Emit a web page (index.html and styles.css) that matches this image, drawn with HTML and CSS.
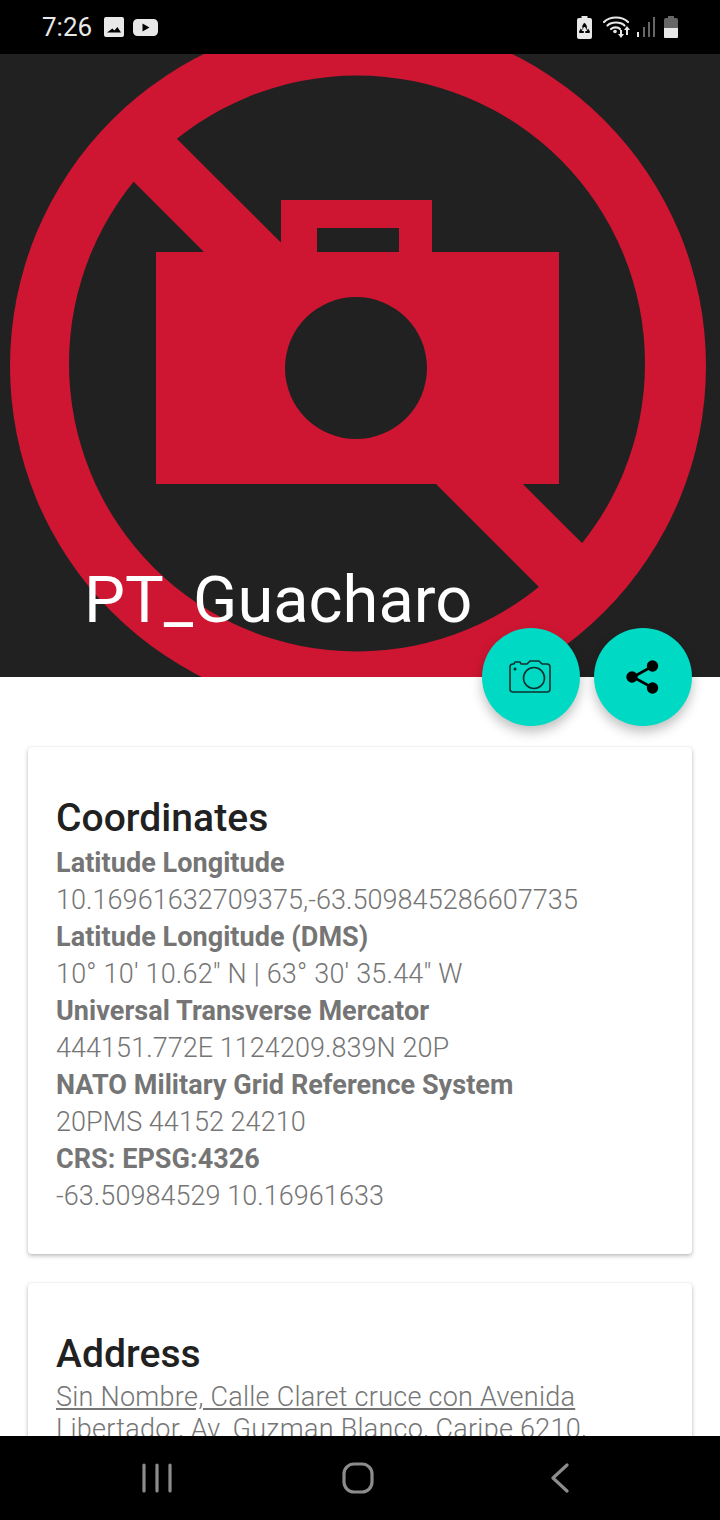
FILE: index.html
```html
<!DOCTYPE html>
<html lang="en">
<head>
    <meta charset="UTF-8">
    <meta name="viewport" content="width=device-width, initial-scale=1.0">
    <title>PT_Guacharo</title>
    <link rel="stylesheet" href="styles.css">
</head>
<body>
    <!-- Status bar -->
    <header class="status-bar">
        <div class="status-left">
            <span class="clock">7:26</span>
            <svg class="picture-icon" width="20" height="20" viewBox="0 0 20 20">
                <path fill="#e8e8e8" fill-rule="evenodd" d="M2 0h16a2 2 0 0 1 2 2v16a2 2 0 0 1-2 2H2a2 2 0 0 1-2-2V2a2 2 0 0 1 2-2zM3 15.500h14l-3.600-5.500-3 3.600-2-2.200z"/>
            </svg>
            <svg width="25" height="17" viewBox="0 0 25 17">
                <path fill="#e8e8e8" fill-rule="evenodd" d="M4.500 0h16a4.500 4.500 0 0 1 4.500 4.500v8a4.500 4.500 0 0 1-4.500 4.500h-16a4.500 4.500 0 0 1-4.500-4.500v-8a4.500 4.500 0 0 1 4.500-4.500zM9.500 4.500v8l7-4z"/>
            </svg>
        </div>
        <div class="status-right">
            <svg class="recycle-icon" width="15" height="23" viewBox="0 0 15 23">
                <path fill="#e8e8e8" d="M4.500 0h6v2h2.500a2 2 0 0 1 2 2v17a2 2 0 0 1-2 2H2a2 2 0 0 1-2-2V4a2 2 0 0 1 2-2h2.500z"/>
                <path fill="none" stroke="#000" stroke-width="2" stroke-linejoin="round" d="M7.500 8l4.500 8H3z"/>
                <path fill="#e8e8e8" d="M4 10.500h1.500v3H4zM9.800 10.500h1.500v3H9.800zM6.800 15h1.500v2.500H6.800z"/>
            </svg>
            <svg class="wifi-icon" width="28" height="22" viewBox="0 0 28 22">
                <g fill="none" stroke="#e8e8e8" stroke-width="2.200" stroke-linecap="round">
                    <path d="M1 6c6-6 18-6 24 0"/>
                    <path d="M4.500 9.500c4-4 13-4 17 0"/>
                    <path d="M8 13c2.500-2.200 7-2.200 9 0"/>
                </g>
                <circle cx="12" cy="15.500" r="1.800" fill="#e8e8e8"/>
                <path fill="#e8e8e8" d="M17 14h2v4h2l-3 4-3-4h2zM24 10l3 4h-2v5h-2v-5h-2z"/>
            </svg>
            <svg class="signal-icon" width="18" height="20" viewBox="0 0 18 20">
                <rect x="0" y="15" width="2" height="5" fill="#e8e8e8"/>
                <rect x="6" y="10" width="2" height="10" fill="#666"/>
                <rect x="11" y="5" width="2" height="15" fill="#666"/>
                <rect x="16" y="0" width="2" height="20" fill="#666"/>
            </svg>
            <svg width="14" height="22" viewBox="0 0 14 22">
                <path fill="#666" d="M4 0h6v2h2a2 2 0 0 1 2 2v8H0V4a2 2 0 0 1 2-2h2z"/>
                <path fill="#e8e8e8" d="M0 12h14v9a1 1 0 0 1-1 1H1a1 1 0 0 1-1-1z"/>
            </svg>
        </div>
    </header>

    <main class="screen">
        <!-- Place photo placeholder -->
        <section class="hero">
            <svg class="hero-art" width="720" height="623" viewBox="0 54 720 623">
                <circle cx="358" cy="366" r="348" fill="#ce1632"/>
                <circle cx="357" cy="363.500" r="288" fill="#212121"/>
                <path fill="#ce1632" d="M104 152L148 110L613 574L570 618z"/>
                <path fill="#ce1632" fill-rule="evenodd" d="M156 252h125v-52h151v52h127v232H156zM317 228v24h82v-24z"/>
                <circle cx="356" cy="368" r="71" fill="#212121"/>
            </svg>
            <h1 class="hero-title">PT_Guacharo</h1>
            <div class="fab-group">
                <button class="fab">
                    <svg width="44" height="34" viewBox="0 0 44 34" fill="none" stroke="#10302e" stroke-width="1.600">
                        <path d="M4 4h1l1-2h5l1 2h6l3-3h9l3 3h5a3 3 0 0 1 3 3v22a3 3 0 0 1-3 3H4a3 3 0 0 1-3-3V7a3 3 0 0 1 3-3z" stroke-linejoin="round"/>
                        <circle cx="25" cy="18" r="10.500"/>
                        <circle cx="6" cy="9" r="1.500" fill="#10302e" stroke="none"/>
                    </svg>
                </button>
                <button class="fab">
                    <svg width="36" height="36" viewBox="0 0 36 36">
                        <path fill="none" stroke="#000" stroke-width="2.600" d="M28 7L8 18l20 11"/>
                        <circle cx="27.500" cy="7" r="5.700"/>
                        <circle cx="7" cy="18" r="5.700"/>
                        <circle cx="27.500" cy="29" r="5.700"/>
                    </svg>
                </button>
            </div>
        </section>

        <!-- Info cards -->
        <section class="cards">
            <article class="card">
                <h2>Coordinates</h2>
                <p class="label">Latitude Longitude</p>
                <p class="value">10.16961632709375,-63.509845286607735</p>
                <p class="label">Latitude Longitude (DMS)</p>
                <p class="value dms">10° 10' 10.62" N | 63° 30' 35.44" W</p>
                <p class="label">Universal Transverse Mercator</p>
                <p class="value">444151.772E 1124209.839N 20P</p>
                <p class="label">NATO Military Grid Reference System</p>
                <p class="value">20PMS 44152 24210</p>
                <p class="label">CRS: EPSG:4326</p>
                <p class="value">-63.50984529 10.16961633</p>
            </article>
            <article class="card">
                <h2>Address</h2>
                <p class="address"><a href="#">Sin Nombre, Calle Claret cruce con Avenida</a><br><a href="#">Libertador, Av. Guzman Blanco, Caripe 6210,</a></p>
            </article>
        </section>
    </main>

    <!-- Navigation bar -->
    <nav class="nav-bar">
        <svg width="30" height="30" viewBox="0 0 30 30" fill="none" stroke="#8c8c8c" stroke-width="3.200" stroke-linecap="round">
            <path d="M2 2v26M15 2v26M28 2v26"/>
        </svg>
        <svg width="32" height="32" viewBox="0 0 32 32" fill="none" stroke="#8c8c8c" stroke-width="3.200">
            <rect x="2" y="2" width="28" height="28" rx="10"/>
        </svg>
        <svg class="back-icon" width="20" height="30" viewBox="0 0 20 30" fill="none" stroke="#8c8c8c" stroke-width="3.200" stroke-linecap="round" stroke-linejoin="round">
            <path d="M17 2L3 15l14 13"/>
        </svg>
    </nav>
</body>
</html>
```

FILE: styles.css
```css
html, body {
    margin: 0;
    padding: 0;
}

body {
    width: 720px;
    height: 1520px;
    display: flex;
    flex-direction: column;
    overflow: hidden;
    font-family: Roboto, sans-serif;
    background: white;
}

.status-bar {
    height: 54px;
    flex: none;
    background: black;
    display: flex;
    justify-content: space-between;
    align-items: center;
    padding: 0 42px;
    box-sizing: border-box;
}

.status-left {
    display: flex;
    align-items: center;
    gap: 9px;
}

.status-right {
    display: flex;
    align-items: center;
    gap: 9px;
}

.status-bar svg {
    display: block;
}

.clock {
    color: #e8e8e8;
    font-size: 26px;
    margin-right: 3px;
}

.recycle-icon {
    margin-right: 2px;
}

.wifi-icon {
    margin-right: -3px;
}

.screen {
    flex: 1;
    overflow: hidden;
}

.hero {
    position: relative;
    height: 623px;
    background: #212121;
}

.hero-art {
    display: block;
}

.hero-title {
    position: absolute;
    left: 84px;
    top: 508px;
    margin: 0;
    color: white;
    font-size: 65px;
    font-weight: 400;
    line-height: 76px;
}

.fab-group {
    position: absolute;
    right: 28px;
    top: 574px;
    display: flex;
    gap: 14px;
}

.fab {
    width: 98px;
    height: 98px;
    padding: 0;
    border: none;
    border-radius: 50%;
    background-color: #00d9c4;
    box-shadow: 0px 6px 12px rgba(0, 0, 0, 0.25);
    display: flex;
    align-items: center;
    justify-content: center;
}

.cards {
    padding: 70px 28px 0;
    display: flex;
    flex-direction: column;
    gap: 29px;
}

.card {
    padding: 44px 28px 39px;
    border-radius: 4px;
    background: white;
    box-shadow: 0px 2px 4px rgba(0, 0, 0, 0.25), 0px 0px 2px rgba(0, 0, 0, 0.08);
}

.card h2 {
    margin: 0;
    color: #212121;
    font-size: 39px;
    font-weight: 500;
    letter-spacing: 0.05px;
    line-height: 54px;
}

.card p {
    margin: 0;
    color: #757575;
    font-size: 27px;
    font-weight: 300;
    line-height: 37px;
}

.card .label {
    font-weight: 700;
    letter-spacing: 0.05px;
}

.card .value {
    letter-spacing: 0.05px;
}

.card .dms {
    letter-spacing: 0.2px;
}

.card .address {
    line-height: 32px;
    letter-spacing: 0.26px;
}

.card a {
    color: #757575;
}

.nav-bar {
    height: 84px;
    flex: none;
    background: black;
    display: flex;
    align-items: center;
    padding: 0 0 0 142px;
    gap: 170px;
}

.back-icon {
    margin-left: 6px;
}
```
